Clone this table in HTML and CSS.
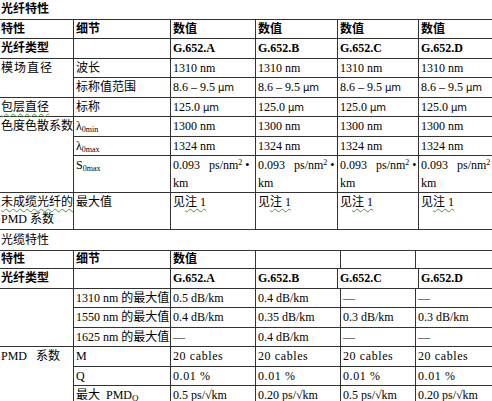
FILE: index.html
```html
<!DOCTYPE html>
<html lang="zh">
<head>
<meta charset="utf-8">
<title>光纤特性</title>
<link rel="stylesheet" href="styles.css">
</head>
<body>
<div class="page">
  <div class="title">光纤特性</div>
  <table class="spec t1">
    <colgroup>
      <col class="c1"><col class="c2"><col class="c3"><col class="c4"><col class="c5"><col class="c6">
    </colgroup>
    <tr class="b">
      <td class="first">特性</td><td>细节</td><td>数值</td><td>数值</td><td>数值</td><td>数值</td>
    </tr>
    <tr class="b">
      <td class="first">光纤类型</td><td></td><td>G.652.A</td><td>G.652.B</td><td>G.652.C</td><td>G.652.D</td>
    </tr>
    <tr>
      <td class="first spread" rowspan="2">模场直径</td><td>波长</td><td>1310 nm</td><td>1310 nm</td><td>1310 nm</td><td>1310 nm</td>
    </tr>
    <tr>
      <td>标称值范围</td><td>8.6 – 9.5 <span class="u">μm</span></td><td>8.6 – 9.5 <span class="u">μm</span></td><td>8.6 – 9.5 <span class="u">μm</span></td><td>8.6 – 9.5 <span class="u">μm</span></td>
    </tr>
    <tr>
      <td class="first"><span class="wg">包层直径</span></td><td>标称</td><td>125.0 <span class="u">μm</span></td><td>125.0 <span class="u">μm</span></td><td>125.0 <span class="u">μm</span></td><td>125.0 <span class="u">μm</span></td>
    </tr>
    <tr>
      <td class="first" rowspan="3">色度色散系数</td><td>λ<sub>0min</sub></td><td>1300 nm</td><td>1300 nm</td><td>1300 nm</td><td>1300 nm</td>
    </tr>
    <tr>
      <td>λ<sub>0max</sub></td><td>1324 nm</td><td>1324 nm</td><td>1324 nm</td><td>1324 nm</td>
    </tr>
    <tr>
      <td>S<sub>0max</sub></td>
      <td><span class="l1"><span class="gap">0.093</span>ps/nm<sup>2</sup> •</span><br>km</td>
      <td><span class="l1"><span class="gap">0.093</span>ps/nm<sup>2</sup> •</span><br>km</td>
      <td><span class="l1"><span class="gap">0.093</span>ps/nm<sup>2</sup> •</span><br>km</td>
      <td><span class="l1"><span class="gap">0.093</span>ps/nm<sup>2</sup> •</span><br>km</td>
    </tr>
    <tr>
      <td class="first"><span class="wg">未成缆光纤的</span><br>PMD 系数</td><td>最大值</td>
      <td>见<span class="wg">注 1</span></td><td>见<span class="wg">注 1</span></td><td>见<span class="wg">注 1</span></td><td>见<span class="wg">注 1</span></td>
    </tr>
  </table>
  <div class="subtitle">光缆特性</div>
  <table class="spec t2">
    <colgroup>
      <col class="c1"><col class="c2"><col class="c3"><col class="d4"><col class="d4b"><col class="d5"><col class="d5b"><col class="d6">
    </colgroup>
    <tr class="b head">
      <td class="first">特性</td><td>细节</td><td>数值</td><td colspan="2"></td><td></td><td colspan="2"></td>
    </tr>
    <tr class="b">
      <td class="first">光纤类型</td><td></td><td>G.652.A</td><td>G.652.B</td><td colspan="3">G.652.C</td><td>G.652.D</td>
    </tr>
    <tr>
      <td class="first" rowspan="3"></td><td>1310 nm 的最大值</td><td>0.5 dB/km</td><td colspan="2">0.4 dB/km</td><td>—</td><td colspan="2">—</td>
    </tr>
    <tr>
      <td>1550 nm 的最大值</td><td>0.4 dB/km</td><td colspan="2">0.35 dB/km</td><td>0.3 dB/km</td><td colspan="2">0.3 dB/km</td>
    </tr>
    <tr>
      <td>1625 nm 的最大值</td><td>—</td><td colspan="2">0.4 dB/km</td><td>—</td><td colspan="2">—</td>
    </tr>
    <tr>
      <td class="first" rowspan="3">PMD&nbsp;&nbsp; 系数</td><td>M</td><td class="w">20 cables</td><td class="w" colspan="2">20 cables</td><td class="w">20 cables</td><td class="w" colspan="2">20 cables</td>
    </tr>
    <tr>
      <td>Q</td><td class="w">0.01 %</td><td class="w" colspan="2">0.01 %</td><td class="w">0.01 %</td><td class="w" colspan="2">0.01 %</td>
    </tr>
    <tr>
      <td>最大&nbsp; PMD<sub class="q">Q</sub></td><td>0.5 <span class="wr">ps</span>/√km</td><td colspan="2">0.20 <span class="wr">ps</span>/√km</td><td>0.5 <span class="wr">ps</span>/√km</td><td colspan="2">0.20 <span class="wr">ps</span>/√km</td>
    </tr>
  </table>
</div>
</body>
</html>
```

FILE: styles.css
```css
html, body {
  margin: 0;
  padding: 0;
  background: #ffffff;
  overflow: hidden;
}

.page {
  width: 492px;
  height: 401px;
  overflow: hidden;
  font-family: "Liberation Serif", "Noto Sans CJK SC", serif;
  font-size: 12px;
  color: #000;
}

.title {
  font-weight: bold;
  line-height: 18.5px;
  padding-left: 1px;
}

.subtitle {
  line-height: 20.5px;
  padding-left: 1px;
}

.spec {
  border-collapse: collapse;
  table-layout: fixed;
  width: 502px;
  margin-left: -2px;
}

.spec td {
  border: 1px solid #333;
  padding: 1.25px 0 0 2px;
  line-height: 17.25px;
  vertical-align: top;
  white-space: nowrap;
  overflow: visible;
}

.spec td.first {
  padding-left: 2px;
}

.spec tr.head td {
  padding-top: 0;
  line-height: 17px;
}

.spec tr.b td {
  font-weight: bold;
}

.c1 { width: 75px; }
.c2 { width: 97px; }
.c3 { width: 85px; }
.c4 { width: 82px; }
.c5 { width: 81px; }
.c6 { width: 82px; }

.d4 { width: 82px; }
.d4b { width: 3px; }
.d5 { width: 75px; }
.d5b { width: 3px; }
.d6 { width: 82px; }

.spread {
  letter-spacing: 1px;
}

.u {
  font-family: "DejaVu Sans", sans-serif;
  font-size: 10px;
}

sub, sup {
  font-size: 8px;
  line-height: 0;
}

sub {
  vertical-align: -2px;
}

sub.q {
  font-size: 9px;
}

sup {
  vertical-align: 4px;
}

.gap {
  margin-right: 9px;
}

.l1 {
  white-space: nowrap;
}

.w {
  letter-spacing: 0.6px;
}

.wg {
  text-decoration: underline wavy #4a9a3a;
  text-decoration-thickness: 1px;
  text-underline-offset: 2px;
}

.wr {
  text-decoration: underline wavy #d02020;
  text-decoration-thickness: 1px;
  text-underline-offset: 2px;
}
```
